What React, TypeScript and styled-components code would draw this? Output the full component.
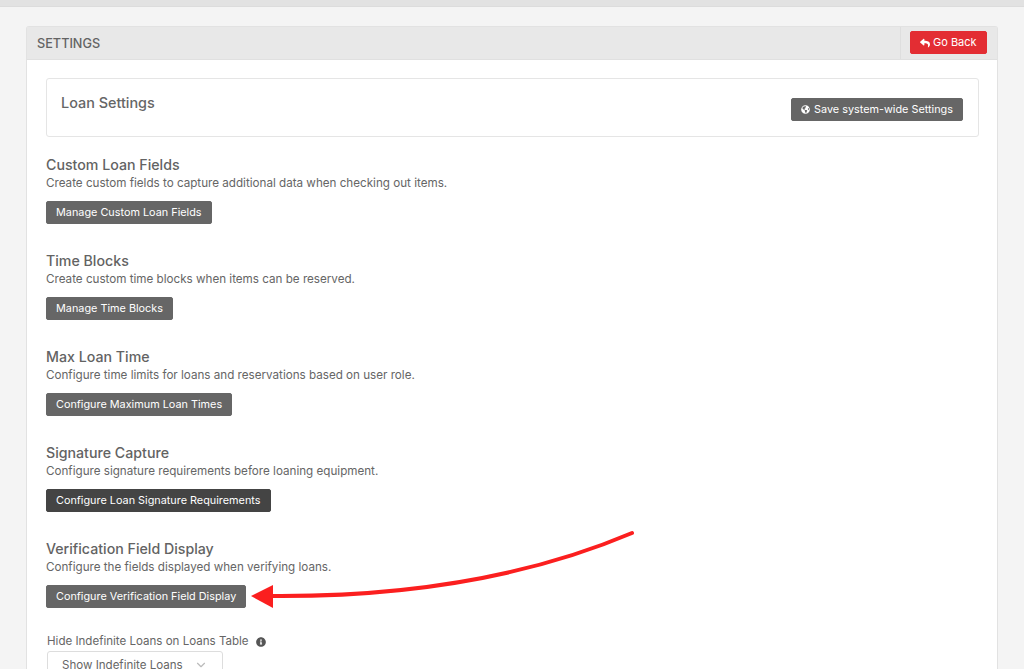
import React from "react";
import styled, { createGlobalStyle } from "styled-components";
import { FaGlobeAmericas, FaInfoCircle, FaReply } from "react-icons/fa";
import { FiChevronDown } from "react-icons/fi";

const Global = createGlobalStyle`
  html, body { margin: 0; padding: 0; height: 669px; overflow: hidden; background: #f4f4f4; }
  body { font-family: Inter, "Liberation Sans", sans-serif; color: #5f5f5f; }
`;
const Page = styled.div`position: relative; height: 669px; overflow: hidden;`;
const TopBar = styled.div`height: 6px; background: #e2e2e2; border-bottom: 1px solid #dcdcdc;`;
const Main = styled.main`padding: 19px 26px 0 26px;`;
const Card = styled.section`
  background: #fff; border: 1px solid #e2e2e2; border-bottom: 0; border-radius: 3px 3px 0 0; height: 700px;
`;
const CardHeader = styled.header`
  height: 32px; display: flex; align-items: stretch; justify-content: space-between;
  background: #e8e8e8; border-bottom: 1px solid #e0e0e0;
`;
const CardTitle = styled.h1`
  margin: 0; padding-left: 10px; font-size: 12.7px; line-height: 33px; font-weight: 500; color: #636363;
`;
const HeaderAction = styled.div`
  width: 97px; box-sizing: border-box; border-left: 1px solid #dedede; padding: 4px 0 0 9px;
`;
const Button = styled.button<{ $tone?: "gray" | "dark" | "red"; $large?: boolean }>`
  display: inline-flex; align-items: center; gap: ${(p) => (p.$large ? "3px" : "4px")}; height: 23px; box-sizing: border-box; padding: 0 9px;
  border: 1px solid ${(p) => (p.$tone === "red" ? "#e32d33" : p.$tone === "dark" ? "#444" : "#666")};
  border-radius: 2px; font: 400 ${(p) => (p.$large ? "11px" : "10.85px")}/1 Inter, "Liberation Sans", sans-serif; color: #fff; white-space: nowrap;
  background: ${(p) => (p.$tone === "red" ? "#e32d33" : p.$tone === "dark" ? "#444" : "#666")};
`;
const CardBody = styled.div`padding: 18px 18px 0 19px;`;
const SettingsBox = styled.div`
  height: 59px; box-sizing: border-box; border: 1px solid #e5e5e5; border-radius: 3px; padding: 15px 15px 0 14px;
  display: flex; justify-content: space-between; margin-bottom: 18px;
`;
const BoxTitle = styled.h2`margin: 0; font-size: 14.4px; line-height: 18px; font-weight: 500; color: #666;`;
const BoxAction = styled.div`padding-top: 4px;`;
const Section = styled.div`height: 96px;`;
const SectionTitle = styled.h3`margin: 0 0 1px; font-size: 14.2px; line-height: 19px; font-weight: 500; color: #636363;`;
const SectionText = styled.p`margin: 0 0 8px; font-size: 11.65px; line-height: 17px; color: #666;`;
const FieldLabel = styled.label`
  display: flex; align-items: center; gap: 7px; margin-top: -1px; padding-left: 1px; font-size: 11.55px; line-height: 15px; color: #666;
`;
const SelectBox = styled.div`
  margin: 2px 0 0 1px; width: 176px; height: 30px; box-sizing: border-box; border: 1px solid #ddd; border-radius: 3px;
  background: #fff; padding: 6px 14px; display: flex; justify-content: space-between; font-size: 11.55px; line-height: 15px; color: #666;
`;
const Arrow = styled.svg`position: absolute; left: 0; top: 0; pointer-events: none;`;

const sections = [
  { t: "Custom Loan Fields", d: "Create custom fields to capture additional data when checking out items.", b: "Manage Custom Loan Fields" },
  { t: "Time Blocks", d: "Create custom time blocks when items can be reserved.", b: "Manage Time Blocks" },
  { t: "Max Loan Time", d: "Configure time limits for loans and reservations based on user role.", b: "Configure Maximum Loan Times" },
  { t: "Signature Capture", d: "Configure signature requirements before loaning equipment.", b: "Configure Loan Signature Requirements", dark: true },
  { t: "Verification Field Display", d: "Configure the fields displayed when verifying loans.", b: "Configure Verification Field Display" },
];

export default function App() {
  return (
    <Page>
      <Global />
      <TopBar />
      <Main>
        <Card>
          <CardHeader>
            <CardTitle>SETTINGS</CardTitle>
            <HeaderAction>
              <Button $tone="red" $large><FaReply size={10} />Go Back</Button>
            </HeaderAction>
          </CardHeader>
          <CardBody>
            <SettingsBox>
              <BoxTitle>Loan Settings</BoxTitle>
              <BoxAction>
                <Button><FaGlobeAmericas size={9} />Save system-wide Settings</Button>
              </BoxAction>
            </SettingsBox>
            {sections.map((s) => (
              <Section key={s.t}>
                <SectionTitle>{s.t}</SectionTitle>
                <SectionText>{s.d}</SectionText>
                <Button $tone={s.dark ? "dark" : "gray"}>{s.b}</Button>
              </Section>
            ))}
            <FieldLabel>Hide Indefinite Loans on Loans Table <FaInfoCircle size={10} color="#555" /></FieldLabel>
            <SelectBox>Show Indefinite Loans <FiChevronDown size={14} color="#bbb" /></SelectBox>
          </CardBody>
        </Card>
      </Main>
      <Arrow width="1024" height="669" viewBox="0 0 1024 669">
        <path d="M632 533 C540 572 420 597 272 596" fill="none" stroke="#fb1f1f" strokeWidth="4" strokeLinecap="round" />
        <path d="M251 596 L273 585 L273 608 Z" fill="#fb1f1f" />
      </Arrow>
    </Page>
  );
}
